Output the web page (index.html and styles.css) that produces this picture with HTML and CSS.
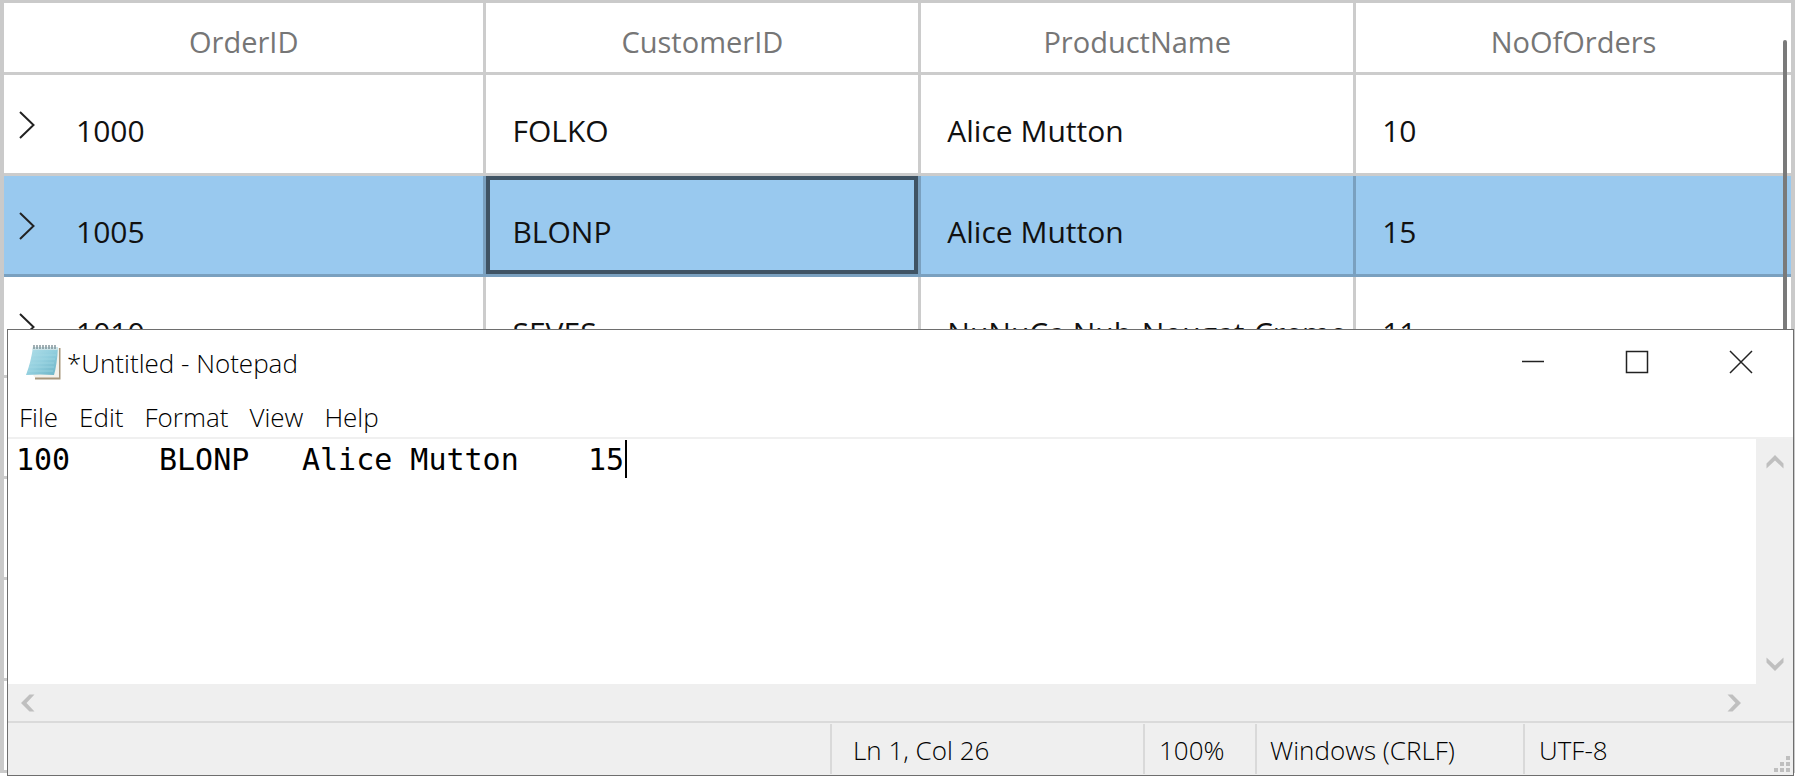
FILE: index.html
```html
<!DOCTYPE html>
<html lang="en">
<head>
<meta charset="utf-8">
<title>Orders grid and Notepad</title>
<link rel="stylesheet" href="styles.css">
</head>
<body class="desktop">
<main class="grid">
  <table class="orders">
    <colgroup><col class="col-id"><col><col><col></colgroup>
    <thead>
      <tr><th>OrderID</th><th>CustomerID</th><th>ProductName</th><th>NoOfOrders</th></tr>
    </thead>
    <tbody>
      <tr>
        <td><div class="master"><button class="expander" aria-label="Expand 1000"><svg viewBox="0 0 16 28"><path d="M1 1 14.500 14 1 27"/></svg></button>1000</div></td>
        <td>FOLKO</td><td>Alice Mutton</td><td>10</td>
      </tr>
      <tr class="selected">
        <td><div class="master"><button class="expander" aria-label="Expand 1005"><svg viewBox="0 0 16 28"><path d="M1 1 14.500 14 1 27"/></svg></button>1005</div></td>
        <td class="current">BLONP</td><td>Alice Mutton</td><td>15</td>
      </tr>
      <tr>
        <td><div class="master"><button class="expander" aria-label="Expand 1010"><svg viewBox="0 0 16 28"><path d="M1 1 14.500 14 1 27"/></svg></button>1010</div></td>
        <td>SEVES</td><td>NuNuCa Nub-Nougat-Creme</td><td>11</td>
      </tr>
      <tr><td></td><td></td><td></td><td></td></tr>
      <tr><td></td><td></td><td></td><td></td></tr>
      <tr><td></td><td></td><td></td><td></td></tr>
      <tr><td></td><td></td><td></td><td></td></tr>
    </tbody>
  </table>
  <div class="grid-thumb"></div>
</main>

<section class="notepad" aria-label="Notepad">
  <header class="titlebar">
    <svg class="app-icon" viewBox="0 0 36 36">
      <defs>
        <linearGradient id="page" x1="0" y1="0" x2="1" y2="1">
          <stop offset="0" stop-color="#b4e0ea"/><stop offset=".5" stop-color="#93cfde"/><stop offset="1" stop-color="#6bb3c6"/>
        </linearGradient>
      </defs>
      <path d="M9 32 32 4h2.500v31.500H9z" fill="#a8977d"/>
      <path d="M7 31 31 4h2v29.500H9z" fill="#f4f1ea"/>
      <path d="M7 3h25q-1 18-4 28-14-1-28 0Q5 18 7 3z" fill="url(#page)"/>
      <path d="M7 3h25l-.3 3H6.500z" fill="#cbe3e8"/>
      <path d="M6 11h24M5 15h24M4 19h24M3 23h25M2 27h25" stroke="#a9dbe6" stroke-width=".6"/>
      <path d="M8 5V1m3 4V1m3 4V1m3 4V1m3 4V1m3 4V1m3 4V1m3 4V1" stroke="#7b8e94" stroke-width="1.400"/>
    </svg>
    <h1 class="title">*Untitled - Notepad</h1>
    <button class="win-btn" aria-label="Minimize"><svg viewBox="0 0 24 24"><path d="M1 11.500h22"/></svg></button>
    <button class="win-btn" aria-label="Maximize"><svg viewBox="0 0 24 24"><path d="M1.500 1.500h21v21h-21z"/></svg></button>
    <button class="win-btn" aria-label="Close"><svg viewBox="0 0 24 24"><path d="m1 1 22 22M23 1 1 23"/></svg></button>
  </header>
  <nav class="menu">
    <button>File</button><button>Edit</button><button>Format</button><button>View</button><button>Help</button>
  </nav>
  <div class="editor">
    <div class="page">
      <textarea class="text" aria-label="Document" spellcheck="false" wrap="off">100	BLONP	Alice Mutton	15</textarea>
      <span class="caret"></span>
    </div>
    <div class="vbar">
      <button aria-label="Scroll up"><svg viewBox="0 0 20 20"><path d="M1.500 11.500 10 3l8.500 8.500v5L10 8.500l-8.500 8z"/></svg></button>
      <button aria-label="Scroll down"><svg viewBox="0 0 20 20"><path d="M1.500 8.500 10 17l8.500-8.500v-5L10 11.500l-8.500-8z"/></svg></button>
    </div>
  </div>
  <div class="hbar">
    <button aria-label="Scroll left"><svg viewBox="0 0 20 20"><path d="M11.500 1.500 3 10l8.500 8.500h5L8.500 10l8-8.500z"/></svg></button>
    <button aria-label="Scroll right"><svg viewBox="0 0 20 20"><path d="M8.500 1.500 17 10l-8.500 8.500h-5L11.500 10l-8-8.500z"/></svg></button>
  </div>
  <footer class="status">
    <span class="pos">Ln 1, Col 26</span>
    <span class="zoom">100%</span>
    <span class="eol">Windows (CRLF)</span>
    <span class="enc">UTF-8</span>
    <svg class="grip" viewBox="0 0 18 18"><path d="M13 1h4v4h-4zM7 7h4v4H7zM13 7h4v4h-4zM1 13h4v4H1zM7 13h4v4H7zM13 13h4v4h-4z"/></svg>
  </footer>
</section>
</body>
</html>
```
FILE: styles.css
```css
* { box-sizing: border-box; }

.desktop {
  margin: 0;
  height: 100vh;
  overflow: hidden;
  position: relative;
  background: #fff;
  font-family: "Open Sans", "Noto Sans", sans-serif;
}

button {
  border: 0;
  padding: 0;
  background: none;
  color: inherit;
  font: inherit;
}

svg { display: block; }

/* Data grid */
.grid {
  position: relative;
  height: calc(100vh - 4px);
  overflow: hidden;
  border: 3px solid #cacaca;
  border-width: 3px 4px;
}

.orders {
  width: 100%;
  table-layout: fixed;
  border-collapse: separate;
  border-spacing: 0;
  font-size: 30px;
  line-height: 40px;
  color: #111;
}

.col-id { width: 27%; }

.orders th,
.orders td {
  border: 0 solid rgba(0, 0, 0, .2);
  border-width: 0 3px 3px 0;
}

.orders th:last-child,
.orders td:last-child { border-right-width: 0; }

.orders th {
  height: 72px;
  padding: 8px 0 0;
  font-size: 29px;
  font-weight: 400;
  color: #767676;
}

.orders td {
  height: 101px;
  padding: 14px 0 0 26px;
  white-space: nowrap;
  overflow: hidden;
}

.orders td:first-child { padding-left: 15px; }

.master {
  display: flex;
  gap: 41px;
}

.expander {
  width: 16px;
  height: 28px;
}

.expander svg {
  width: 16px;
  height: 28px;
  fill: none;
  stroke: #222;
  stroke-width: 2;
}

.selected { background: #99c9ef; }

.current { box-shadow: inset 0 0 0 4px #3f5364; }

.grid-thumb {
  position: absolute;
  top: 37px;
  right: 4px;
  bottom: 0;
  width: 4px;
  border-radius: 2px;
  background: #7a7a7a;
}

/* Notepad window */
.notepad {
  position: absolute;
  inset: 329px 1px 1px 7px;
  display: flex;
  flex-direction: column;
  border: 1px solid #6e6e6e;
  background: #fff;
  color: #000;
  font-size: 26px;
  font-weight: 300;
}

.titlebar {
  display: flex;
  align-items: center;
  height: 64px;
  padding-left: 18px;
}

.app-icon {
  width: 36px;
  height: 36px;
}

.title {
  flex: 1;
  margin: 0;
  padding: 2px 0 0 5px;
  font-size: 26px;
  line-height: 28px;
  font-weight: 300;
}

.win-btn {
  display: grid;
  place-items: center;
  width: 104px;
  height: 64px;
}

.win-btn svg {
  width: 24px;
  height: 24px;
  fill: none;
  stroke: #222;
  stroke-width: 1.5;
}

.menu {
  display: flex;
  gap: 21px;
  height: 45px;
  padding: 4px 0 0 11px;
  border-bottom: 2px solid #f0f0f0;
  line-height: 39px;
}

.editor {
  flex: 1;
  display: flex;
  min-height: 0;
}

.page {
  flex: 1;
  position: relative;
  font: 30px/40px "DejaVu Sans Mono", monospace;
}

.text {
  display: block;
  width: 100%;
  height: 100%;
  border: 0;
  outline: 0;
  padding: 1px 8px 0;
  resize: none;
  overflow: hidden;
  background: none;
  color: #000;
  font: inherit;
  tab-size: 143px;
}

/* Sits after four tab stops and two characters */
.caret {
  position: absolute;
  top: 1px;
  left: calc(4 * 143px + 2ch + 9px);
  width: 2px;
  height: 38px;
  background: #000;
}

.vbar,
.hbar {
  display: flex;
  justify-content: space-between;
  background: #efefef;
}

.vbar {
  flex-direction: column;
  align-items: center;
  width: 37px;
  padding: 13px 0 10px;
}

.hbar {
  align-items: center;
  height: 37px;
  padding: 0 49px 0 10px;
}

.vbar svg,
.hbar svg {
  width: 20px;
  height: 20px;
  fill: #bfbfbf;
}

.status {
  position: relative;
  display: flex;
  justify-content: flex-end;
  height: 54px;
  padding: 1px 0;
  border-top: 2px solid #dadada;
  background: #efefef;
  line-height: 52px;
}

.status span {
  border-left: 2px solid #d9d9d9;
  white-space: nowrap;
}

.pos {
  width: 313px;
  padding-left: 21px;
}

.zoom {
  width: 112px;
  padding-left: 14px;
}

.eol {
  width: 268px;
  padding-left: 13px;
}

.enc {
  width: 270px;
  padding-left: 14px;
}

.grip {
  position: absolute;
  right: 2px;
  bottom: 2px;
  width: 18px;
  height: 18px;
  fill: #bfbfbf;
}
```
